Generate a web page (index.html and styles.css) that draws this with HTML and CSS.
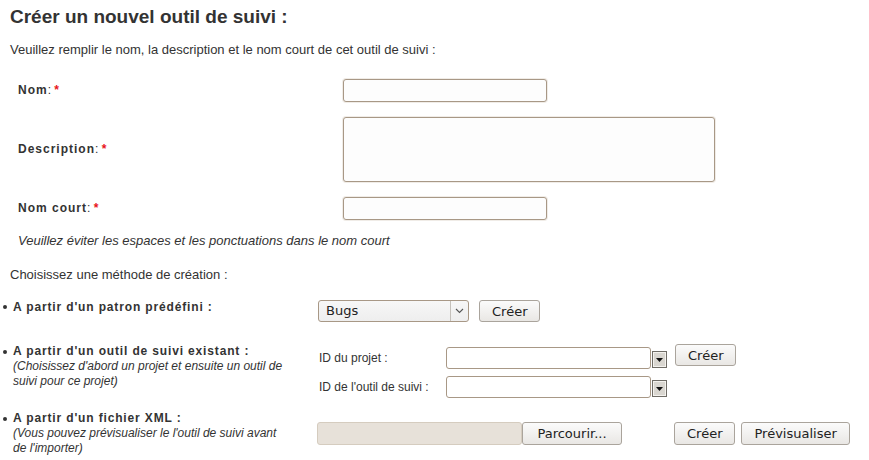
FILE: index.html
```html
<!DOCTYPE html>
<html lang="fr">
<head>
<meta charset="utf-8">
<title>Créer un nouvel outil de suivi</title>
<link rel="stylesheet" href="styles.css">
</head>
<body>
<div class="page">
  <h1 class="title">Créer un nouvel outil de suivi :</h1>
  <p class="intro">Veuillez remplir le nom, la description et le nom court de cet outil de suivi :</p>

  <div class="fields">
    <div class="label"><b>Nom</b>: <span class="req">*</span></div>
    <div class="input short"></div>

    <div class="label"><b>Description</b>: <span class="req">*</span></div>
    <div class="input area"></div>

    <div class="label"><b>Nom court</b>: <span class="req">*</span></div>
    <div class="input short"></div>

    <div class="hint">Veuillez éviter les espaces et les ponctuations dans le nom court</div>
  </div>

  <p class="choose">Choisissez une méthode de création :</p>

  <ul class="methods">
    <li class="method m1">
      <div class="m-label"><b>A partir d'un patron prédéfini :</b></div>
      <div class="m-ctrl">
        <div class="select-bugs">
          <span class="sel-val">Bugs</span>
          <span class="sel-btn"><svg width="9" height="6" viewBox="0 0 9 6"><path d="M1 1 L4.5 4.5 L8 1" fill="none" stroke="#555" stroke-width="1.1"/></svg></span>
        </div>
        <span class="btn">Créer</span>
      </div>
    </li>

    <li class="method m2">
      <div class="m-label"><b>A partir d'un outil de suivi existant :</b><br><i>(Choisissez d'abord un projet et ensuite un outil de suivi pour ce projet)</i></div>
      <div class="m-ctrl combos">
        <span class="combo-label">ID du projet :</span>
        <span class="combo"><span class="combo-box"></span><svg class="combo-arrow" width="15" height="17" viewBox="0 0 15 17"><rect x="0.5" y="0.5" width="14" height="16" fill="#d9d6d0" stroke="#6f6c66"/><rect x="1.5" y="1.5" width="12" height="14" fill="none" stroke="#f4f2ee"/><path d="M4 7 L11 7 L7.5 11 Z" fill="#111"/></svg></span>
        <span class="combo-label">ID de l'outil de suivi :</span>
        <span class="combo"><span class="combo-box"></span><svg class="combo-arrow" width="15" height="17" viewBox="0 0 15 17"><rect x="0.5" y="0.5" width="14" height="16" fill="#d9d6d0" stroke="#6f6c66"/><rect x="1.5" y="1.5" width="12" height="14" fill="none" stroke="#f4f2ee"/><path d="M4 7 L11 7 L7.5 11 Z" fill="#111"/></svg></span>
      </div>
      <div class="m-act"><span class="btn">Créer</span></div>
    </li>

    <li class="method m3">
      <div class="m-label"><b>A partir d'un fichier XML :</b><br><i>(Vous pouvez prévisualiser le l'outil de suivi avant de l'importer)</i></div>
      <div class="m-ctrl file">
        <span class="file-box"></span><span class="btn browse">Parcourir...</span>
      </div>
      <div class="m-act"><span class="btn">Créer</span><span class="btn">Prévisualiser</span></div>
    </li>
  </ul>
</div>
</body>
</html>
```

FILE: styles.css
```css
html, body {
  margin: 0;
  padding: 0;
  background: #ffffff;
}
body {
  font-family: "Liberation Sans", Arial, sans-serif;
  font-size: 12px;
  line-height: 15px;
  color: #333333;
}
.page {
  padding-left: 10px;
}
.title {
  margin: 0;
  padding-top: 6px;
  font-size: 19px;
  line-height: 22px;
  font-weight: bold;
  color: #333333;
}
.intro {
  margin: 14px 0 0 0;
  font-size: 13px;
}
.fields {
  display: grid;
  grid-template-columns: 325px auto;
  row-gap: 15px;
  align-items: center;
  padding-left: 8px;
  margin-top: 22px;
}
.label b {
  letter-spacing: 1px;
}
.req {
  color: #e8141a;
  font-weight: bold;
}
.input {
  box-sizing: border-box;
  border: 1px solid #a89886;
  border-radius: 3px;
  background: #fdfdfd;
  box-shadow: 0 0 0 1px #f0ece7;
}
.input.short {
  width: 204px;
  height: 23px;
}
.input.area {
  width: 372px;
  height: 65px;
}
.hint {
  grid-column: 1 / 3;
  font-style: italic;
  font-size: 13px;
  margin-top: -2px;
}
.choose {
  margin: 19px 0 0 0;
  font-size: 13px;
}
.methods {
  list-style: none;
  margin: 17px 0 0 -10px;
  padding: 0;
}
.method {
  display: flex;
  align-items: flex-start;
}
.m-label {
  position: relative;
  box-sizing: border-box;
  width: 318px;
  padding-left: 13px;
  padding-right: 27px;
}
.m-label::before {
  content: "";
  position: absolute;
  left: 3px;
  top: 6px;
  width: 4px;
  height: 4px;
  border-radius: 50%;
  background: #333333;
}
.m-label b {
  letter-spacing: 0.85px;
}
.m-ctrl {
  box-sizing: border-box;
  width: 357px;
  display: flex;
  align-items: center;
}
.m-act {
  display: flex;
  gap: 6px;
}
.m1 .m-label {
  padding-top: 1px;
}
.m1 .m-ctrl {
  gap: 10px;
  margin-top: 1px;
}
.select-bugs {
  box-sizing: border-box;
  width: 151px;
  height: 22px;
  display: flex;
  border: 1px solid #a89886;
  border-radius: 3px;
  background: linear-gradient(#f7f7f7, #eeeeee);
  font-family: "DejaVu Sans", sans-serif;
  font-size: 13px;
  line-height: 20px;
  color: #222222;
}
.sel-val {
  flex: 1;
  padding-left: 7px;
}
.sel-btn {
  width: 17px;
  border-left: 1px solid #c4c0ba;
  display: flex;
  align-items: center;
  justify-content: center;
}
.btn {
  box-sizing: border-box;
  display: inline-flex;
  align-items: center;
  justify-content: center;
  height: 22px;
  padding: 0 12px;
  border: 1px solid #aaa49c;
  border-radius: 3px;
  background: linear-gradient(#fbfbfb, #e9e7e4);
  font-family: "DejaVu Sans", sans-serif;
  font-size: 13px;
  color: #222222;
  white-space: nowrap;
}
.m2 {
  margin-top: 22px;
}
.combos {
  display: grid;
  grid-template-columns: 127px auto;
  row-gap: 7px;
  align-items: center;
  padding-top: 3px;
  padding-left: 1px;
}
.combo {
  display: flex;
  align-items: center;
  gap: 1px;
}
.combo-box {
  box-sizing: border-box;
  width: 205px;
  height: 22px;
  border: 1px solid #a89886;
  border-radius: 3px;
  background: #ffffff;
}
.combo-arrow {
  display: block;
  margin-top: 2px;
}
.m3 {
  margin-top: 13px;
}
.file {
  padding-top: 11px;
  margin-left: -1px;
}
.file-box {
  box-sizing: border-box;
  width: 205px;
  height: 23px;
  border: 1px solid #d5ccbf;
  border-radius: 3px;
  background: #e7e1d9;
}
.browse {
  width: 100px;
  height: 23px;
  padding: 0;
}
.m3 .m-act {
  padding-top: 11px;
}
.m3 .m-act .btn {
  height: 23px;
}
```
